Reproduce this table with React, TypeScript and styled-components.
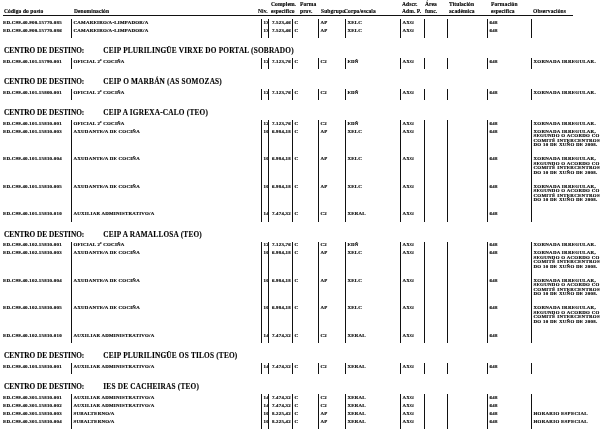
import styled, { createGlobalStyle } from "styled-components";

const GlobalStyle = createGlobalStyle`
  html, body {
    margin: 0;
    padding: 0;
    background: #ffffff;
  }
  body {
    font-family: "Liberation Serif", "Times New Roman", serif;
    color: #000;
    -webkit-font-smoothing: antialiased;
  }
`;

type Row = {
  code: string;
  name: string;
  niv: string;
  comp: string;
  sub: string;
  corpo: string;
  obs?: string[];
};

type Section = {
  title?: string;
  rows: Row[];
};

const LONG_OBS = [
  "XORNADA IRREGULAR,",
  "SEGUNDO O ACORDO CO",
  "COMITÉ INTERCENTROS",
  "DO 10 DE XUÑO DE 2008.",
];

const oficial = (code: string): Row => ({
  code,
  name: "OFICIAL 2ª COCIÑA",
  niv: "12",
  comp: "7.123,76",
  sub: "C2",
  corpo: "EDÑ",
  obs: ["XORNADA IRREGULAR."],
});

const axudante = (code: string): Row => ({
  code,
  name: "AXUDANTE/A DE COCIÑA",
  niv: "10",
  comp: "6.984,18",
  sub: "AP",
  corpo: "XELC",
  obs: LONG_OBS,
});

const auxiliar = (code: string): Row => ({
  code,
  name: "AUXILIAR ADMINISTRATIVO/A",
  niv: "14",
  comp: "7.474,32",
  sub: "C2",
  corpo: "XERAL",
});

const subalterno = (code: string): Row => ({
  code,
  name: "SUBALTERNO/A",
  niv: "10",
  comp: "8.225,42",
  sub: "AP",
  corpo: "XERAL",
  obs: ["HORARIO ESPECIAL"],
});

const camareiro = (code: string): Row => ({
  code,
  name: "CAMAREIRO/A-LIMPADOR/A",
  niv: "13",
  comp: "7.523,46",
  sub: "AP",
  corpo: "XELC",
});

const sections: Section[] = [
  {
    rows: [
      camareiro("ED.C99.40.900.15770.085"),
      camareiro("ED.C99.40.900.15770.086"),
    ],
  },
  {
    title: "CEIP PLURILINGÜE VIRXE DO PORTAL (SOBRADO)",
    rows: [oficial("ED.C99.40.101.15790.001")],
  },
  {
    title: "CEIP O MARBÁN (AS SOMOZAS)",
    rows: [oficial("ED.C99.40.101.15800.001")],
  },
  {
    title: "CEIP A IGREXA-CALO (TEO)",
    rows: [
      oficial("ED.C99.40.101.15810.001"),
      axudante("ED.C99.40.101.15810.003"),
      axudante("ED.C99.40.101.15810.004"),
      axudante("ED.C99.40.101.15810.005"),
      auxiliar("ED.C99.40.101.15810.010"),
    ],
  },
  {
    title: "CEIP A RAMALLOSA (TEO)",
    rows: [
      oficial("ED.C99.40.102.15810.001"),
      axudante("ED.C99.40.102.15810.003"),
      axudante("ED.C99.40.102.15810.004"),
      axudante("ED.C99.40.102.15810.005"),
      auxiliar("ED.C99.40.102.15810.010"),
    ],
  },
  {
    title: "CEIP PLURILINGÜE OS TILOS (TEO)",
    rows: [auxiliar("ED.C99.40.103.15810.001")],
  },
  {
    title: "IES DE CACHEIRAS (TEO)",
    rows: [
      auxiliar("ED.C99.40.301.15810.001"),
      auxiliar("ED.C99.40.301.15810.002"),
      subalterno("ED.C99.40.301.15810.003"),
      subalterno("ED.C99.40.301.15810.004"),
    ],
  },
];

// Styles
const Page = styled.div`
  width: 615px;
  font-weight: bold;
  will-change: transform; /* grayscale text antialiasing */
`;

const HeaderGrid = styled.div`
  display: grid;
  grid-template-columns: 70px 184px 13px 29px 21px 23px 58px 23px 24px 42px 42px 41px;
  width: 570px;
  margin-left: 3px;
  margin-bottom: 3px;
  padding-top: 1px;
  border-bottom: 1px solid #111;
  font-size: 5.5px;
  line-height: 7px;
  letter-spacing: 0.1px;
  -webkit-text-stroke: 0.12px #000;
`;

const HeadCell = styled.div`
  align-self: end;
  padding-left: 1px;
  white-space: nowrap;
`;

const RowGrid = styled.div<{ $tall?: boolean }>`
  display: grid;
  grid-template-columns: 71px 190px 7px 24px 26px 27px 55px 24px 23px 40px 44px 1fr;
  height: ${(p) => (p.$tall ? "27.5px" : "8px")};
  font-size: 4.9px;
  line-height: 4.4px;
  letter-spacing: 0.25px;
  -webkit-text-stroke: 0.15px #000;

  &:last-child {
    height: ${(p) => (p.$tall ? "30.5px" : "11px")};
  }
`;

const Cell = styled.div<{ $align?: "left" | "center" | "right"; $first?: boolean }>`
  border-left: ${(p) => (p.$first ? "none" : "1px solid #111")};
  padding: 1.8px ${(p) => (p.$align === "right" ? "1px" : "0")} 0
    ${(p) => (p.$first ? "3px" : "1.5px")};
  text-align: ${(p) => p.$align || "left"};
  white-space: nowrap;
  overflow: hidden;
`;

const ObsCell = styled(Cell)`
  letter-spacing: 0.3px;
`;

const SectionTitle = styled.div`
  display: flex;
  gap: 19px;
  height: 10px;
  margin: 8px 0 2px;
  padding-left: 4px;
  font-size: 7.3px;
  line-height: 10px;
  white-space: nowrap;
  -webkit-text-stroke: 0.12px #000;
`;

const SectionName = styled.span`
  letter-spacing: 0.2px;
`;

const ObsLine = styled.div``;

function TableHeader() {
  return (
    <HeaderGrid>
      <HeadCell>Código do posto</HeadCell>
      <HeadCell>Denominación</HeadCell>
      <HeadCell>Niv.</HeadCell>
      <HeadCell>
        Complem.
        <br />
        específico
      </HeadCell>
      <HeadCell>
        Forma
        <br />
        prov.
      </HeadCell>
      <HeadCell>Subgrupo</HeadCell>
      <HeadCell>Corpo/escala</HeadCell>
      <HeadCell>
        Adscr.
        <br />
        Adm. P.
      </HeadCell>
      <HeadCell>
        Área
        <br />
        func.
      </HeadCell>
      <HeadCell>
        Titulación
        <br />
        académica
      </HeadCell>
      <HeadCell>
        Formación
        <br />
        específica
      </HeadCell>
      <HeadCell>Observacións</HeadCell>
    </HeaderGrid>
  );
}

function PostRow({ row }: { row: Row }) {
  const tall = (row.obs?.length || 0) > 1;
  return (
    <RowGrid $tall={tall}>
      <Cell $first>{row.code}</Cell>
      <Cell>{row.name}</Cell>
      <Cell $align="center">{row.niv}</Cell>
      <Cell $align="right">{row.comp}</Cell>
      <Cell>C</Cell>
      <Cell>{row.sub}</Cell>
      <Cell>{row.corpo}</Cell>
      <Cell>AXG</Cell>
      <Cell />
      <Cell />
      <Cell>648</Cell>
      <ObsCell>
        {row.obs?.map((line) => (
          <ObsLine key={line}>{line}</ObsLine>
        ))}
      </ObsCell>
    </RowGrid>
  );
}

export default function App() {
  return (
    <Page>
      <GlobalStyle />
      <TableHeader />
      {sections.map((s, i) => (
        <div key={i}>
          {s.title && (
            <SectionTitle>
              <span>CENTRO DE DESTINO:</span>
              <SectionName>{s.title}</SectionName>
            </SectionTitle>
          )}
          <div>
            {s.rows.map((r) => (
              <PostRow key={r.code} row={r} />
            ))}
          </div>
        </div>
      ))}
    </Page>
  );
}
